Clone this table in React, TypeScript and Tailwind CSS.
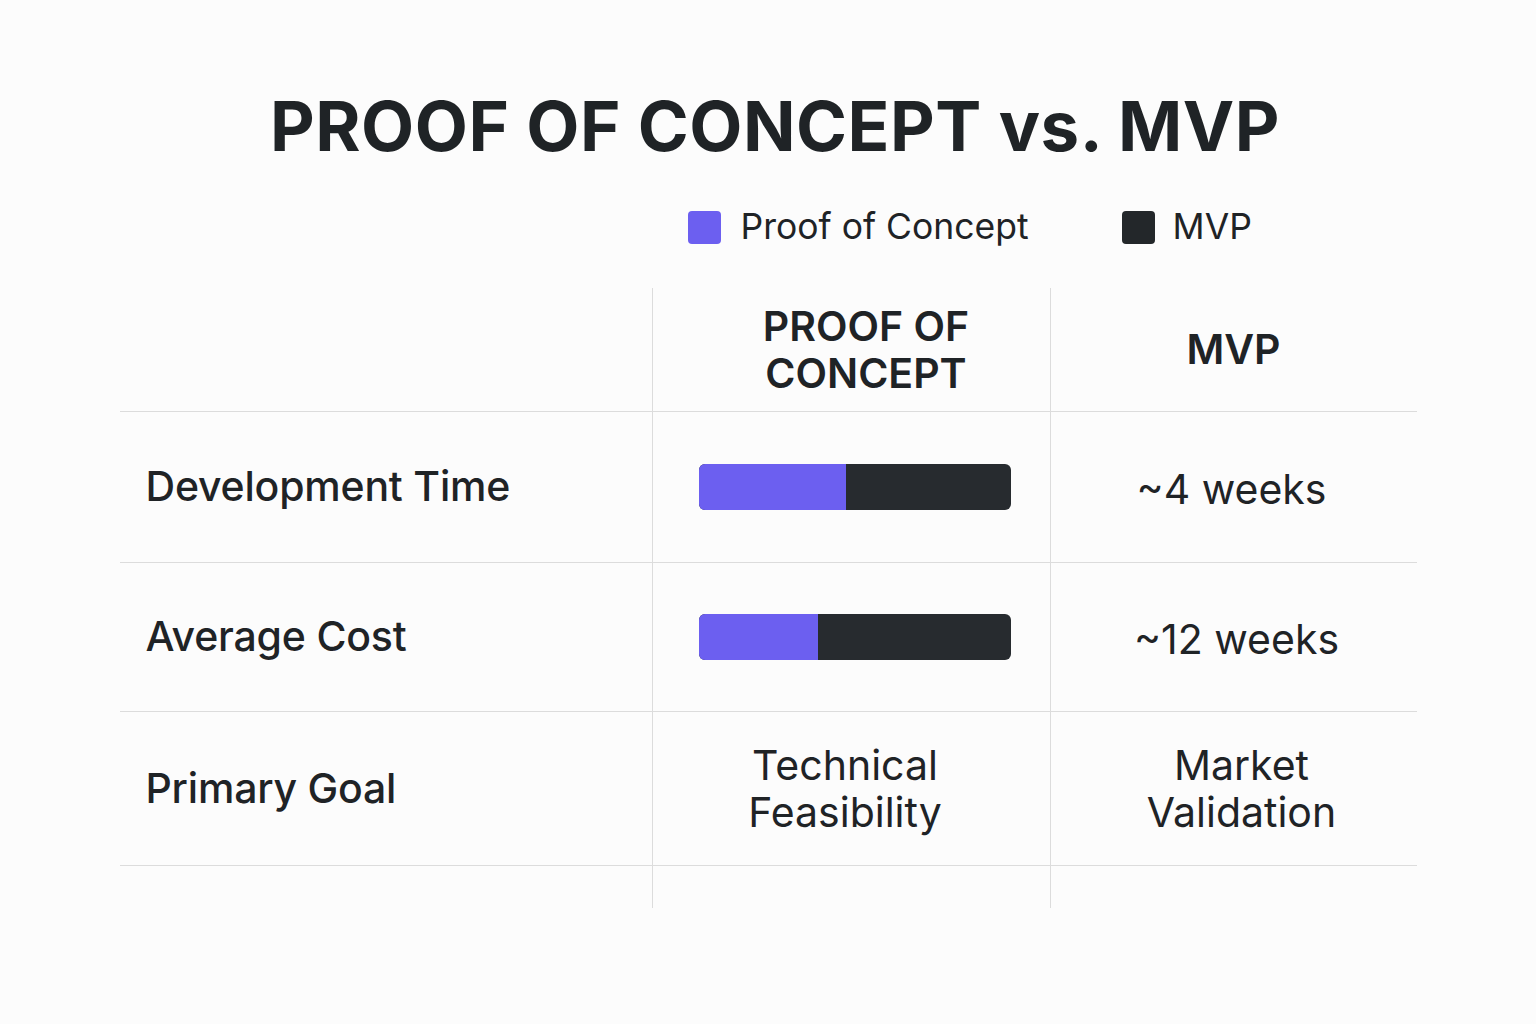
import React from "react";

const font = { fontFamily: "Inter, 'Noto Sans', sans-serif" };

function Bar({ pct }: { pct: number }) {
  return (
    <div className="flex h-[46px] w-[312px] overflow-hidden rounded-[6px] bg-[#272b2f]">
      <div className="h-full bg-[#6c5ff0]" style={{ width: `${pct}%` }} />
    </div>
  );
}

export default function App() {
  const label = "flex items-center pl-[26px] text-[41px] font-medium text-[#1f2326] tracking-[-0.2px]";
  const cell = "flex items-center justify-center border-l border-[#dcdcdc] text-center text-[41px] text-[#1f2326] leading-[47px]";
  return (
    <div className="min-h-[1024px] w-full bg-[#fcfcfc]" style={font}>
      <div className="flex flex-col items-center pt-[88px]">
        <h1 className="ml-[14px] text-[69px] font-bold leading-[76px] tracking-[0.5px] text-[#1f2326]">
          PROOF OF CONCEPT vs. MVP
        </h1>
        <div className="mt-[43px] flex w-[1297px] items-center pl-[568px]">
          <div className="h-[33px] w-[33px] rounded-[4px] bg-[#6c5ff0]" />
          <span className="ml-[20px] text-[35.5px] leading-[40px] text-[#1f2326]">Proof of Concept</span>
          <div className="ml-[93px] h-[33px] w-[33px] rounded-[4px] bg-[#23272a]" />
          <span className="ml-[18px] text-[35.5px] leading-[40px] text-[#1f2326]">MVP</span>
        </div>
        <div className="mt-[41px] grid w-[1297px] grid-cols-[532px_398px_367px] grid-rows-[124px_151px_149px_154px_42px]">
          <div className="border-b border-[#dcdcdc]" />
          <div className={cell + " border-b font-semibold text-[37px] leading-[45px] pl-[30px]"}>
            PROOF OF<br />CONCEPT
          </div>
          <div className={cell + " border-b font-semibold text-[37px]"}>MVP</div>

          <div className={label + " border-b border-[#dcdcdc]"}>Development Time</div>
          <div className={cell + " border-b pl-[8px]"}>
            <Bar pct={47} />
          </div>
          <div className={cell + " border-b pt-[4px] pr-[4px]"}>~4 weeks</div>

          <div className={label + " border-b border-[#dcdcdc]"}>Average Cost</div>
          <div className={cell + " border-b pl-[8px]"}>
            <Bar pct={38} />
          </div>
          <div className={cell + " border-b pt-[4px] pl-[6px]"}>~12 weeks</div>

          <div className={label + " border-b border-[#dcdcdc]"}>Primary Goal</div>
          <div className={cell + " border-b pr-[12px]"}>
            Technical<br />Feasibility
          </div>
          <div className={cell + " border-b pl-[16px]"}>
            Market<br />Validation
          </div>

          <div />
          <div className="border-l border-[#dcdcdc]" />
          <div className="border-l border-[#dcdcdc]" />
        </div>
      </div>
    </div>
  );
}
